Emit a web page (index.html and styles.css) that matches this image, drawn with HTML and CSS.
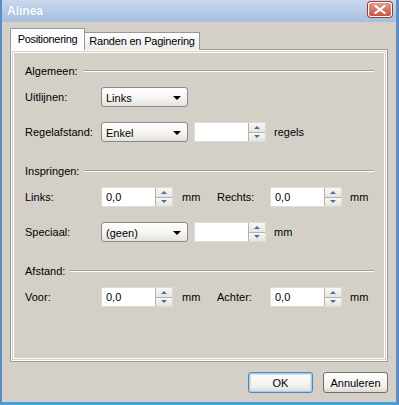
FILE: index.html
```html
<!DOCTYPE html>
<html lang="nl">
<head>
    <meta charset="UTF-8">
    <title>Alinea</title>
    <link rel="stylesheet" href="styles.css">
</head>
<body>
    <div class="window">
        <div class="titlebar">
            <span class="title">Alinea</span>
            <span class="close">
                <svg width="12" height="9" viewBox="0 0 12 9">
                    <path d="M1.5 1 L10.5 8 M10.5 1 L1.5 8" stroke="#fff" stroke-width="2.2" stroke-linecap="square"/>
                </svg>
            </span>
        </div>

        <div class="dialog">
            <div class="tabs">
                <div class="tab active">Positionering</div>
                <div class="tab">Randen en Paginering</div>
            </div>

            <div class="pane">
                <!-- Algemeen -->
                <div class="group-head"><span>Algemeen:</span><i class="rule"></i></div>
                <div class="row">
                    <span class="label">Uitlijnen:</span>
                    <div class="combo"><span>Links</span><i class="arrow"></i></div>
                </div>
                <div class="row">
                    <span class="label">Regelafstand:</span>
                    <div class="combo"><span>Enkel</span><i class="arrow"></i></div>
                    <div class="spin spin-gap">
                        <span class="value"></span>
                        <div class="spin-btns"><i class="up"></i><i class="down"></i></div>
                    </div>
                    <span class="unit">regels</span>
                </div>

                <!-- Inspringen -->
                <div class="group-head"><span>Inspringen:</span><i class="rule"></i></div>
                <div class="row">
                    <span class="label">Links:</span>
                    <div class="spin">
                        <span class="value">0,0</span>
                        <div class="spin-btns"><i class="up"></i><i class="down"></i></div>
                    </div>
                    <span class="unit unit-fixed">mm</span>
                    <span class="label2">Rechts:</span>
                    <div class="spin">
                        <span class="value">0,0</span>
                        <div class="spin-btns"><i class="up"></i><i class="down"></i></div>
                    </div>
                    <span class="unit">mm</span>
                </div>
                <div class="row">
                    <span class="label">Speciaal:</span>
                    <div class="combo"><span>(geen)</span><i class="arrow"></i></div>
                    <div class="spin spin-gap">
                        <span class="value"></span>
                        <div class="spin-btns"><i class="up"></i><i class="down"></i></div>
                    </div>
                    <span class="unit">mm</span>
                </div>

                <!-- Afstand -->
                <div class="group-head"><span>Afstand:</span><i class="rule"></i></div>
                <div class="row">
                    <span class="label">Voor:</span>
                    <div class="spin">
                        <span class="value">0,0</span>
                        <div class="spin-btns"><i class="up"></i><i class="down"></i></div>
                    </div>
                    <span class="unit unit-fixed">mm</span>
                    <span class="label2">Achter:</span>
                    <div class="spin">
                        <span class="value">0,0</span>
                        <div class="spin-btns"><i class="up"></i><i class="down"></i></div>
                    </div>
                    <span class="unit">mm</span>
                </div>
            </div>

            <div class="buttons">
                <button class="btn default">OK</button>
                <button class="btn">Annuleren</button>
            </div>
        </div>
    </div>
</body>
</html>
```

FILE: styles.css
```css
body {
    margin: 0;
    font-family: "Liberation Sans", Arial, sans-serif;
    font-size: 11px;
    color: #000;
    background-color: #d4d0c8;
}

.window {
    width: 399px;
    height: 405px;
    box-sizing: border-box;
    display: flex;
    flex-direction: column;
    background-color: #d4d0c8;
    border-left: 2px solid #5d8cc4;
    border-right: 3px solid #5d8cc4;
    border-bottom: 3px solid #43a2dc;
}

.titlebar {
    height: 22px;
    flex-shrink: 0;
    display: flex;
    align-items: center;
    justify-content: space-between;
    background: linear-gradient(#c9d8ed, #a6bedf);
}

.title {
    padding-left: 5px;
    color: #fff;
    font-weight: bold;
    font-size: 12px;
    text-shadow: 0 0 1px #8aa2c4;
}

.close {
    width: 24px;
    height: 15px;
    margin-right: 4px;
    margin-bottom: 4px;
    box-sizing: border-box;
    border: 1px solid #fff;
    border-radius: 3px;
    background: linear-gradient(#e39a8c, #c8543f);
    box-shadow: 0 0 0 1px #9c3b30;
    display: flex;
    align-items: center;
    justify-content: center;
}

.dialog {
    flex: 1;
    display: flex;
    flex-direction: column;
    padding: 6px 8px 9px 8px;
}

.tabs {
    display: flex;
    align-items: flex-end;
    margin-bottom: -1px;
    position: relative;
    z-index: 1;
}

.tab {
    width: 115px;
    height: 18px;
    box-sizing: border-box;
    line-height: 16px;
    text-align: center;
    border: 1px solid #919b9c;
    border-bottom: none;
    border-left: none;
    background: linear-gradient(#fefefe, #ecebe6);
    font-size: 11px;
    letter-spacing: -0.2px;
    white-space: nowrap;
}

.tab.active {
    width: 75px;
    height: 22px;
    line-height: 20px;
    border: 1px solid #919b9c;
    border-bottom: none;
    background: #fcfcfe;
    letter-spacing: -0.3px;
}

.pane {
    flex: 1;
    box-sizing: border-box;
    padding: 13px 13px 0 14px;
    border: 1px solid #919b9c;
    box-shadow: inset 0 0 0 1px #fff, inset 0 0 0 2px #d4d0c8, inset 0 0 0 3px #fff;
    background-color: #d4d0c8;
}

.group-head {
    height: 16px;
    display: flex;
    align-items: center;
    margin-top: 21px;
    margin-bottom: 8px;
}

.group-head:first-child {
    margin-top: 0;
}

.group-head .rule {
    flex: 1;
    margin-left: 5px;
    border-top: 1px solid #a0a0a0;
    border-bottom: 1px solid #fff;
}

.row {
    display: flex;
    align-items: center;
    height: 20px;
}

.row + .row {
    margin-top: 15px;
}

.label {
    width: 76px;
    flex-shrink: 0;
}

.label2 {
    width: 53px;
    flex-shrink: 0;
}

.combo {
    width: 87px;
    height: 20px;
    box-sizing: border-box;
    display: flex;
    align-items: center;
    justify-content: space-between;
    padding: 1px 6px 0 4px;
    border: 1px solid #8a8a8a;
    border-radius: 3px;
    background: linear-gradient(#ffffff, #f4f3ef 60%, #e3e1da);
}

.combo .arrow {
    width: 0;
    height: 0;
    border-left: 4px solid transparent;
    border-right: 4px solid transparent;
    border-top: 4px solid #000;
}

.spin {
    width: 72px;
    height: 20px;
    box-sizing: border-box;
    display: flex;
    background-color: #fff;
    border: 1px solid #dedbd4;
}

.spin-gap {
    margin-left: 6px;
}

.spin .value {
    flex: 1;
    padding-left: 4px;
    line-height: 18px;
}

.spin-btns {
    width: 16px;
    display: flex;
    flex-direction: column;
    border-left: 1px solid #b5b2ab;
}

.spin-btns i {
    flex: 1;
    display: flex;
    align-items: center;
    justify-content: center;
    background: linear-gradient(#f7f7f5, #e6e4de);
}

.spin-btns i.up {
    border-bottom: 1px solid #b5b2ab;
}

.spin-btns i::before {
    content: "";
    width: 0;
    height: 0;
    border-left: 3px solid transparent;
    border-right: 3px solid transparent;
}

.spin-btns i.up::before {
    border-bottom: 3px solid #4d6bb0;
}

.spin-btns i.down::before {
    border-top: 3px solid #4d6bb0;
}

.unit {
    padding-left: 8px;
}

.unit-fixed {
    width: 44px;
    box-sizing: border-box;
    padding-left: 9px;
    flex-shrink: 0;
}

.buttons {
    display: flex;
    justify-content: flex-end;
    gap: 10px;
    margin-top: 10px;
}

.btn {
    width: 65px;
    height: 21px;
    box-sizing: border-box;
    padding: 0;
    font-family: "Liberation Sans", Arial, sans-serif;
    font-size: 11px;
    color: #000;
    border: 1px solid #6f6f6f;
    border-radius: 3px;
    background: linear-gradient(#ffffff, #f1f0ec 70%, #dcd9d1);
}

.btn.default {
    border-color: #6b7f96;
    box-shadow: inset 0 0 0 1px #9ed0f4, inset 0 0 0 2px #c9e5f8;
}
```
